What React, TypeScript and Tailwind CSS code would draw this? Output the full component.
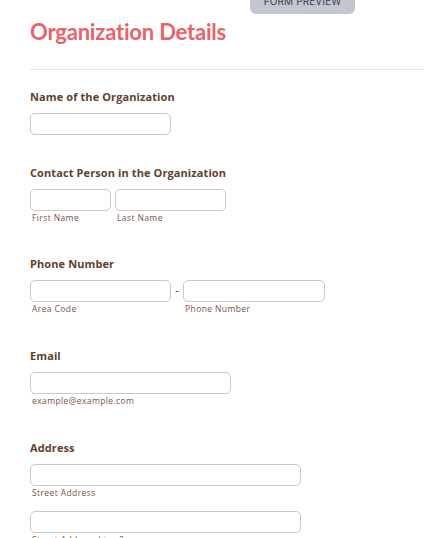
import React from "react";

function Field({ w, sub }: { w: string; sub?: string }) {
  return (
    <div className="flex flex-col">
      <input
        type="text"
        className={`${w} h-[22px] rounded-[5px] border border-[#c9c9c9] bg-white outline-none`}
      />
      {sub ? (
        <span className="mt-[2px] pl-[2px] text-[8.5px] leading-[10px] text-[#7b5346] font-['Open_Sans',sans-serif] tracking-[0.4px]">
          {sub}
        </span>
      ) : null}
    </div>
  );
}

function Label({ children }: { children: React.ReactNode }) {
  return (
    <h3 className="text-[11px] leading-[14px] font-bold tracking-[0.1px] text-[#61402f] font-['Open_Sans',sans-serif] mb-[9px]">
      {children}
    </h3>
  );
}

export default function App() {
  return (
    <div className="w-[424px] h-[538px] overflow-hidden bg-white font-['Lato',sans-serif]">
      {/*top button*/}
      <div className="pl-[250px]">
        <button
          type="button"
          className="-mt-[16px] w-[105px] h-[30px] pt-[5px] rounded-b-[6px] bg-[#c2c6cf] text-[#3b404b] text-[10px] tracking-[0.1px] font-['Inter',sans-serif] flex items-center justify-center"
        >
          FORM PREVIEW
        </button>
      </div>
      <div className="pl-[30px]">
        <h1 className="mt-[4px] text-[22px] leading-[28px] font-bold tracking-[-0.2px] text-[#e8636a] font-['Lato',sans-serif]">
          Organization Details
        </h1>
        <div className="mt-[23px] border-t border-[#e3e3e3]" />

        <div className="pt-[20px]">
          <Label>Name of the Organization</Label>
          <Field w="w-[141px]" />
        </div>

        <div className="pt-[31px]">
          <Label>Contact Person in the Organization</Label>
          <div className="flex gap-[4px]">
            <Field w="w-[81px]" sub="First Name" />
            <Field w="w-[111px]" sub="Last Name" />
          </div>
        </div>

        <div className="pt-[34px]">
          <Label>Phone Number</Label>
          <div className="flex items-start">
            <Field w="w-[141px]" sub="Area Code" />
            <span className="w-[12px] h-[22px] flex items-center justify-center text-[11px] text-[#61402f]">-</span>
            <Field w="w-[142px]" sub="Phone Number" />
          </div>
        </div>

        <div className="pt-[35px]">
          <Label>Email</Label>
          <Field w="w-[201px]" sub="example@example.com" />
        </div>

        <div className="pt-[35px]">
          <Label>Address</Label>
          <Field w="w-[271px]" sub="Street Address" />
          <div className="mt-[13px]">
            <Field w="w-[271px]" sub="Street Address Line 2" />
          </div>
        </div>
      </div>
    </div>
  );
}
